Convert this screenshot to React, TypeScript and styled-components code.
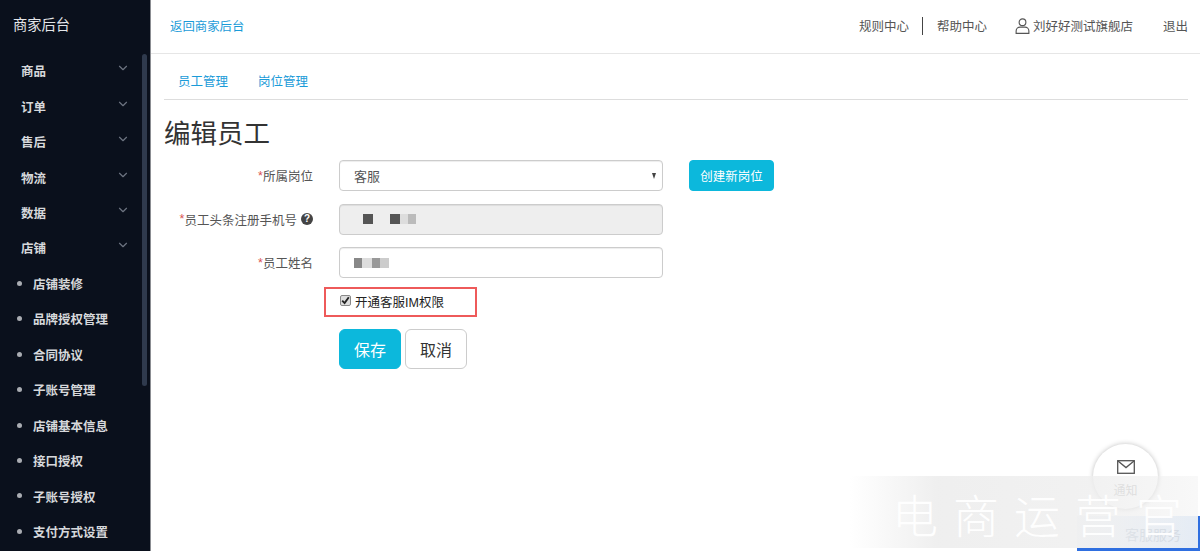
import React from 'react'
import styled, { createGlobalStyle } from 'styled-components'
import { ChevronDown } from 'lucide-react'

const GlobalStyle = createGlobalStyle`
  html, body {
    margin: 0;
    padding: 0;
    height: 100%;
    overflow: hidden;
    background: #fff;
    font-family: "Liberation Sans", "Noto Sans CJK SC", sans-serif;
    color: #333;
  }
`

const groups = ['商品', '订单', '售后', '物流', '数据', '店铺']
const subItems = ['店铺装修', '品牌授权管理', '合同协议', '子账号管理', '店铺基本信息', '接口授权', '子账号授权', '支付方式设置']

const phoneMosaic = [
  { gap: 0, width: 10, color: '#555' },
  { gap: 17, width: 10, color: '#555' },
  { gap: 0, width: 8, color: '#ddd' },
  { gap: 0, width: 8, color: '#bbb' }
]

const nameMosaic = [
  { gap: 0, width: 8, color: '#888' },
  { gap: 0, width: 10, color: '#ddd' },
  { gap: 0, width: 8, color: '#999' },
  { gap: 0, width: 9, color: '#ccc' }
]

const App: React.FC = () => {
  return (
    <Page>
      <GlobalStyle />
      <Sidebar>
        <Brand>商家后台</Brand>
        <Menu>
          {groups.map(g => (
            <GroupItem key={g}>
              <span>{g}</span>
              <ChevronDown size={14} strokeWidth={2} color="#6d7480" />
            </GroupItem>
          ))}
          {subItems.map(s => (
            <SubItem key={s}>{s}</SubItem>
          ))}
        </Menu>
        <ScrollThumb />
      </Sidebar>

      <Main>
        <TopBar>
          <BackLink>返回商家后台</BackLink>
          <TopRight>
            <TopText>规则中心</TopText>
            <TopDivider />
            <TopText>帮助中心</TopText>
            <UserBlock>
              <svg width="15" height="18" viewBox="0 0 16 18" fill="none" stroke="#555" strokeWidth="1.2">
                <circle cx="8" cy="5" r="3.6" />
                <path d="M1.2 16.8v-2.6c0-2.4 2-4 4.2-4h5.2c2.2 0 4.2 1.6 4.2 4v2.6z" />
              </svg>
              <TopText>刘好好测试旗舰店</TopText>
            </UserBlock>
            <LogoutText>退出</LogoutText>
          </TopRight>
        </TopBar>

        <Content>
          <Tabs>
            <Tab>员工管理</Tab>
            <Tab>岗位管理</Tab>
          </Tabs>
          <Title>编辑员工</Title>

          <FormRow>
            <Label><Star>*</Star>所属岗位</Label>
            <SelectBox>
              <span>客服</span>
              <Caret />
            </SelectBox>
            <CreateButton>创建新岗位</CreateButton>
          </FormRow>

          <FormRow>
            <Label>
              <Star>*</Star>员工头条注册手机号
              <HelpIcon>?</HelpIcon>
            </Label>
            <InputBox $disabled>
              {phoneMosaic.map((m, i) => (
                <Mosaic key={i} $gap={m.gap} $width={m.width} $color={m.color} />
              ))}
            </InputBox>
          </FormRow>

          <FormRow>
            <Label><Star>*</Star>员工姓名</Label>
            <InputBox>
              {nameMosaic.map((m, i) => (
                <Mosaic key={i} $gap={m.gap} $width={m.width} $color={m.color} />
              ))}
            </InputBox>
          </FormRow>

          <CheckRow>
            <CheckHighlight>
              <CheckMark>
                <svg width="9" height="9" viewBox="0 0 9 9" fill="none" stroke="#222" strokeWidth="1.9">
                  <path d="M1.2 4.6l2.4 2.5 4.2-5.8" />
                </svg>
              </CheckMark>
              开通客服IM权限
            </CheckHighlight>
          </CheckRow>

          <ActionRow>
            <SaveButton>保存</SaveButton>
            <CancelButton>取消</CancelButton>
          </ActionRow>
        </Content>
      </Main>

      <MailBubble>
        <svg width="18" height="14" viewBox="0 0 18 14" fill="none" stroke="#555" strokeWidth="1.3">
          <rect x="0.7" y="0.7" width="16.6" height="12.6" />
          <path d="M1 1l8 6.6L17 1" />
        </svg>
        <MailLabel>通知</MailLabel>
      </MailBubble>
      <ServiceTag>客服服务</ServiceTag>
      <WatermarkBand>
        <WatermarkText>电商运营官</WatermarkText>
      </WatermarkBand>
    </Page>
  )
}

export default App

const Page = styled('div')`
  position: relative;
  display: flex;
  width: 1200px;
  height: 551px;
  overflow: hidden;
`

const Sidebar = styled('aside')`
  position: relative;
  flex: 0 0 151px;
  height: 551px;
  overflow: hidden;
  background: #0a101c;
  border-right: 1px solid #8b8d92;
  box-sizing: border-box;
`

const Brand = styled('div')`
  padding: 16px 0 0 13px;
  height: 37px;
  font-size: 14.25px;
  line-height: 18px;
  color: #e4e6e9;
`

const Menu = styled('div')`
  padding-top: 0;
`

const GroupItem = styled('div')`
  display: flex;
  align-items: center;
  justify-content: space-between;
  height: 35.46px;
  padding: 0 20px 0 21px;
  font-size: 12.5px;
  font-weight: 700;
  color: #d6d8db;

  svg {
    margin-top: -5px;
  }
`

const SubItem = styled('div')`
  position: relative;
  display: flex;
  align-items: center;
  height: 35.46px;
  padding-left: 33px;
  font-size: 12.5px;
  font-weight: 700;
  color: #d6d8db;

  &::before {
    content: '';
    position: absolute;
    left: 17px;
    top: 15px;
    width: 5px;
    height: 5px;
    border-radius: 50%;
    background: #a9acb2;
  }
`

const ScrollThumb = styled('div')`
  position: absolute;
  top: 54px;
  right: 3px;
  width: 5px;
  height: 332px;
  border-radius: 3px;
  background: #2f3a4d;
`

const Main = styled('main')`
  flex: 1;
  min-width: 0;
`

const TopBar = styled('header')`
  display: flex;
  align-items: center;
  justify-content: space-between;
  box-sizing: border-box;
  height: 54px;
  padding: 0 12px 2px 19px;
  border-bottom: 1px solid #e6e6e6;
`

const BackLink = styled('a')`
  font-size: 12.4px;
  color: #1a9bd8;
`

const TopRight = styled('div')`
  display: flex;
  align-items: center;
`

const TopText = styled('span')`
  font-size: 12.5px;
  color: #555;
`

const TopDivider = styled('span')`
  width: 1px;
  height: 18px;
  margin: 0 14px 0 13px;
  background: #444;
`

const UserBlock = styled('div')`
  display: flex;
  align-items: center;
  gap: 3px;
  margin-left: 28px;
`

const LogoutText = styled(TopText)`
  margin-left: 30px;
`

const Content = styled('div')`
  padding: 0 12px 0 13px;
`

const Tabs = styled('nav')`
  display: flex;
  gap: 30px;
  height: 46px;
  padding: 8px 0 0 14px;
  box-sizing: border-box;
  align-items: center;
  border-bottom: 1px solid #ddd;
`

const Tab = styled('a')`
  font-size: 12.5px;
  color: #1a9bd8;
`

const Title = styled('h1')`
  margin: 20px 0 12px;
  height: 28px;
  font-size: 26.5px;
  line-height: 28px;
  font-weight: 400;
  color: #333;
`

const FormRow = styled('div')`
  display: flex;
  align-items: center;
  height: 31px;
  margin-bottom: 12.5px;
`

const Label = styled('label')`
  display: flex;
  align-items: center;
  justify-content: flex-end;
  flex: 0 0 149px;
  margin-right: 26px;
  font-size: 12.5px;
  color: #555;
`

const Star = styled('span')`
  color: #d9534f;
`

const HelpIcon = styled('span')`
  display: inline-flex;
  align-items: center;
  justify-content: center;
  width: 12px;
  height: 12px;
  margin-left: 4px;
  border-radius: 50%;
  background: #444;
  color: #fff;
  font-size: 10px;
  font-weight: 700;
  line-height: 1;
`

const SelectBox = styled('div')`
  display: flex;
  align-items: center;
  justify-content: space-between;
  box-sizing: border-box;
  width: 324px;
  height: 31px;
  padding: 0 6px 0 14px;
  border: 1px solid #ccc;
  border-radius: 4px;
  box-shadow: inset 0 1px 1px rgba(0, 0, 0, 0.075);
  font-size: 13px;
  color: #555;
`

const Caret = styled('span')`
  width: 0;
  height: 0;
  border-left: 2.5px solid transparent;
  border-right: 2.5px solid transparent;
  border-top: 6px solid #444;
`

const InputBox = styled('div')<{ $disabled?: boolean }>`
  display: flex;
  align-items: center;
  box-sizing: border-box;
  width: 324px;
  height: 31px;
  padding-left: ${props => (props.$disabled ? 23 : 14)}px;
  border: 1px solid #ccc;
  border-radius: 4px;
  background: ${props => (props.$disabled ? '#eee' : '#fff')};
  box-shadow: inset 0 1px 1px rgba(0, 0, 0, 0.075);
`

const Mosaic = styled('span')<{ $gap: number; $width: number; $color: string }>`
  width: ${props => props.$width}px;
  height: 10px;
  margin-left: ${props => props.$gap}px;
  background: ${props => props.$color};
`

const CreateButton = styled('button')`
  width: 85px;
  height: 31px;
  margin-left: 26px;
  padding: 0;
  border: 1px solid #0cb8dc;
  border-radius: 4px;
  background: #0cb8dc;
  color: #fff;
  font-family: inherit;
  font-size: 12.5px;
`

const CheckRow = styled('div')`
  display: flex;
  margin: -4px 0 12px 160px;
`

const CheckHighlight = styled('div')`
  display: flex;
  align-items: center;
  box-sizing: border-box;
  width: 153px;
  height: 30px;
  padding-left: 14px;
  border: 2px solid #ee5a5a;
  font-size: 12.5px;
  color: #222;
`

const CheckMark = styled('span')`
  display: inline-flex;
  align-items: center;
  justify-content: center;
  box-sizing: border-box;
  width: 11px;
  height: 11px;
  margin-right: 4px;
  margin-top: -2px;
  border: 1px solid #888;
  border-radius: 2px;
  background: #ddd;
`

const ActionRow = styled('div')`
  display: flex;
  gap: 4px;
  margin-left: 175px;
`

const SaveButton = styled('button')`
  width: 62px;
  height: 40px;
  padding: 0;
  border: 1px solid #0cb8dc;
  border-radius: 6px;
  background: #0cb8dc;
  color: #fff;
  font-family: inherit;
  font-size: 16px;
`

const CancelButton = styled('button')`
  width: 62px;
  height: 40px;
  padding: 0;
  border: 1px solid #ccc;
  border-radius: 6px;
  background: #fff;
  color: #333;
  font-family: inherit;
  font-size: 16px;
`

const MailBubble = styled('div')`
  position: absolute;
  left: 1093px;
  top: 444px;
  display: flex;
  flex-direction: column;
  align-items: center;
  box-sizing: border-box;
  width: 65px;
  height: 65px;
  padding-top: 16px;
  border-radius: 50%;
  background: #fff;
  box-shadow: 0 0 5px rgba(0, 0, 0, 0.25);
`

const MailLabel = styled('span')`
  margin-top: 7px;
  font-size: 12px;
  color: #bbb;
`

const WatermarkBand = styled('div')`
  position: absolute;
  left: 850px;
  top: 476px;
  width: 348px;
  height: 72px;
  overflow: hidden;
  background: linear-gradient(to right, rgba(255, 255, 255, 0.85), rgba(236, 236, 236, 0.85) 25%, rgba(238, 238, 238, 0.8) 70%, rgba(240, 240, 240, 0.45) 100%);
`

const WatermarkText = styled('span')`
  position: absolute;
  left: 42px;
  top: 6px;
  font-size: 46px;
  line-height: 62px;
  letter-spacing: 15px;
  white-space: nowrap;
  color: rgba(255, 255, 255, 0.95);
  font-family: "Noto Sans CJK SC", sans-serif;
  font-weight: 300;
`

const ServiceTag = styled('span')`
  position: absolute;
  right: 0;
  bottom: 0;
  box-sizing: border-box;
  width: 123px;
  height: 35px;
  padding: 11px 0 0 48px;
  background: linear-gradient(to right, #f4f7fc, #dbe8f8);
  border-bottom: 3px solid #2f6fe0;
  border-right: 2px solid #2f6fe0;
  font-size: 14px;
  line-height: 16px;
  color: #b9c6d6;
`
